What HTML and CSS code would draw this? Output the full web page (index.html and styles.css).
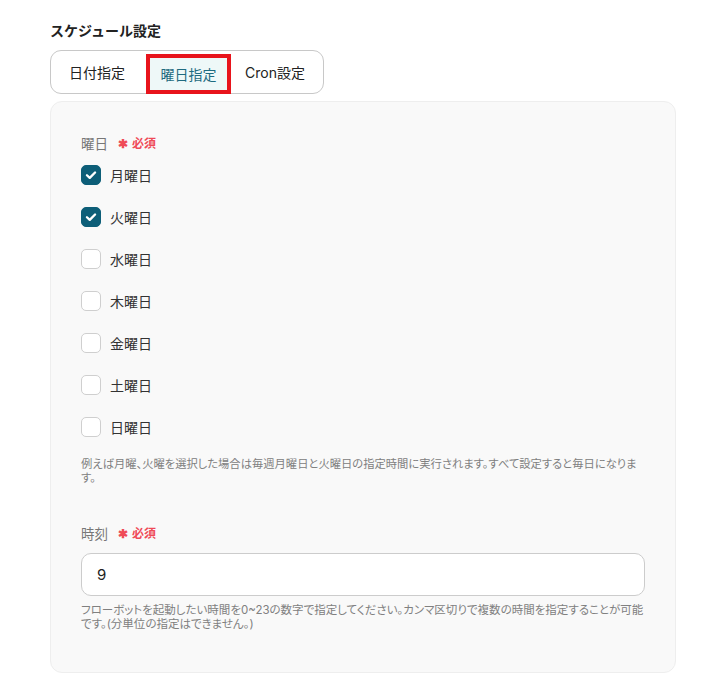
FILE: index.html
```html
<!DOCTYPE html>
<html lang="ja">
<head>
<meta charset="utf-8">
<link rel="stylesheet" href="styles.css">
</head>
<body>
<div class="page">
  <div class="title">スケジュール設定</div>
  <div class="tabs">
    <div class="tab">日付指定</div>
    <div class="tab active">曜日指定</div>
    <div class="tab">Cron設定</div>
  </div>
  <div class="panel">
    <div class="field-label">曜日<span class="req"><span class="ast">✱</span>必須</span></div>
    <div class="checks">
      <label class="check"><span class="box on"><svg viewBox="0 0 20 20" width="20" height="20"><path d="M5.5 10.3 L8.6 13.2 L14.5 7.2" fill="none" stroke="#fff" stroke-width="2.6" stroke-linecap="round" stroke-linejoin="round"/></svg></span>月曜日</label>
      <label class="check"><span class="box on"><svg viewBox="0 0 20 20" width="20" height="20"><path d="M5.5 10.3 L8.6 13.2 L14.5 7.2" fill="none" stroke="#fff" stroke-width="2.6" stroke-linecap="round" stroke-linejoin="round"/></svg></span>火曜日</label>
      <label class="check"><span class="box"></span>水曜日</label>
      <label class="check"><span class="box"></span>木曜日</label>
      <label class="check"><span class="box"></span>金曜日</label>
      <label class="check"><span class="box"></span>土曜日</label>
      <label class="check"><span class="box"></span>日曜日</label>
    </div>
    <p class="help help1">例えば月曜、火曜を選択した場合は毎週月曜日と火曜日の指定時間に実行されます。すべて設定すると毎日になります。</p>
    <div class="field-label second">時刻<span class="req"><span class="ast">✱</span>必須</span></div>
    <div class="input">9</div>
    <p class="help help2">フローボットを起動したい時間を0~23の数字で指定してください。カンマ区切りで複数の時間を指定することが可能です。(分単位の指定はできません。)</p>
  </div>
</div>
</body>
</html>
```

FILE: styles.css
```css
* { box-sizing: border-box; }
body {
  margin: 0;
  background: #fff;
  font-family: "Inter", "Noto Sans CJK JP", sans-serif;
  color: #333;
}
.page {
  padding: 21px 44px 0 50px;
}
.title {
  font-size: 14px;
  font-weight: 600;
  line-height: 20px;
  color: #222;
}
.tabs {
  margin-top: 9px;
  width: 274px;
  height: 44px;
  border: 1px solid #c8c8c8;
  border-radius: 11px;
  padding: 3px 4px;
  display: flex;
}
.tab {
  width: 88px;
  display: flex;
  align-items: center;
  justify-content: center;
  font-size: 14px;
  color: #222;
}
.tab:first-child {
  padding-right: 4px;
}
.tab.active {
  margin-left: 3px;
  width: 85px;
  height: 40px;
  background: #eef8f8;
  color: #1e6b80;
  border: 4px solid #e8141c;
}
.panel {
  margin-top: 7px;
  width: 626px;
  height: 572px;
  background: #f9f9f9;
  border: 1px solid #eeeeee;
  border-radius: 12px;
  padding: 32px 30px 0 30px;
}
.field-label {
  height: 20px;
  line-height: 20px;
  font-size: 13.5px;
  color: #777;
  display: flex;
  align-items: center;
}
.req {
  margin-left: 10px;
  font-size: 12px;
  font-weight: 600;
  color: #ef4a57;
  display: flex;
  align-items: center;
}
.ast {
  font-size: 12px;
  margin-right: 4px;
}
.checks {
  margin-top: 0;
}
.check {
  height: 42px;
  display: flex;
  align-items: center;
  font-size: 14px;
  color: #333;
}
.box {
  width: 20px;
  height: 20px;
  border: 1px solid #cfcfcf;
  border-radius: 5px;
  background: #fff;
  margin-right: 9px;
  display: flex;
  align-items: center;
  justify-content: center;
}
.box.on {
  background: #0d5e78;
  border-color: #0d5e78;
}
.box svg { display: block; }
.help {
  margin: 9px 0 0;
  font-size: 11.5px;
  line-height: 14px;
  color: #808080;
  font-feature-settings: "palt";
}
.help1 {
  font-size: 11.3px;
}
.field-label.second {
  margin-top: 39px;
}
.input {
  margin-top: 9px;
  height: 43px;
  background: #fff;
  border: 1px solid #cccccc;
  border-radius: 10px;
  padding-left: 15px;
  display: flex;
  align-items: center;
  font-size: 15px;
  color: #222;
}
.help2 {
  margin-top: 7px;
}
```
